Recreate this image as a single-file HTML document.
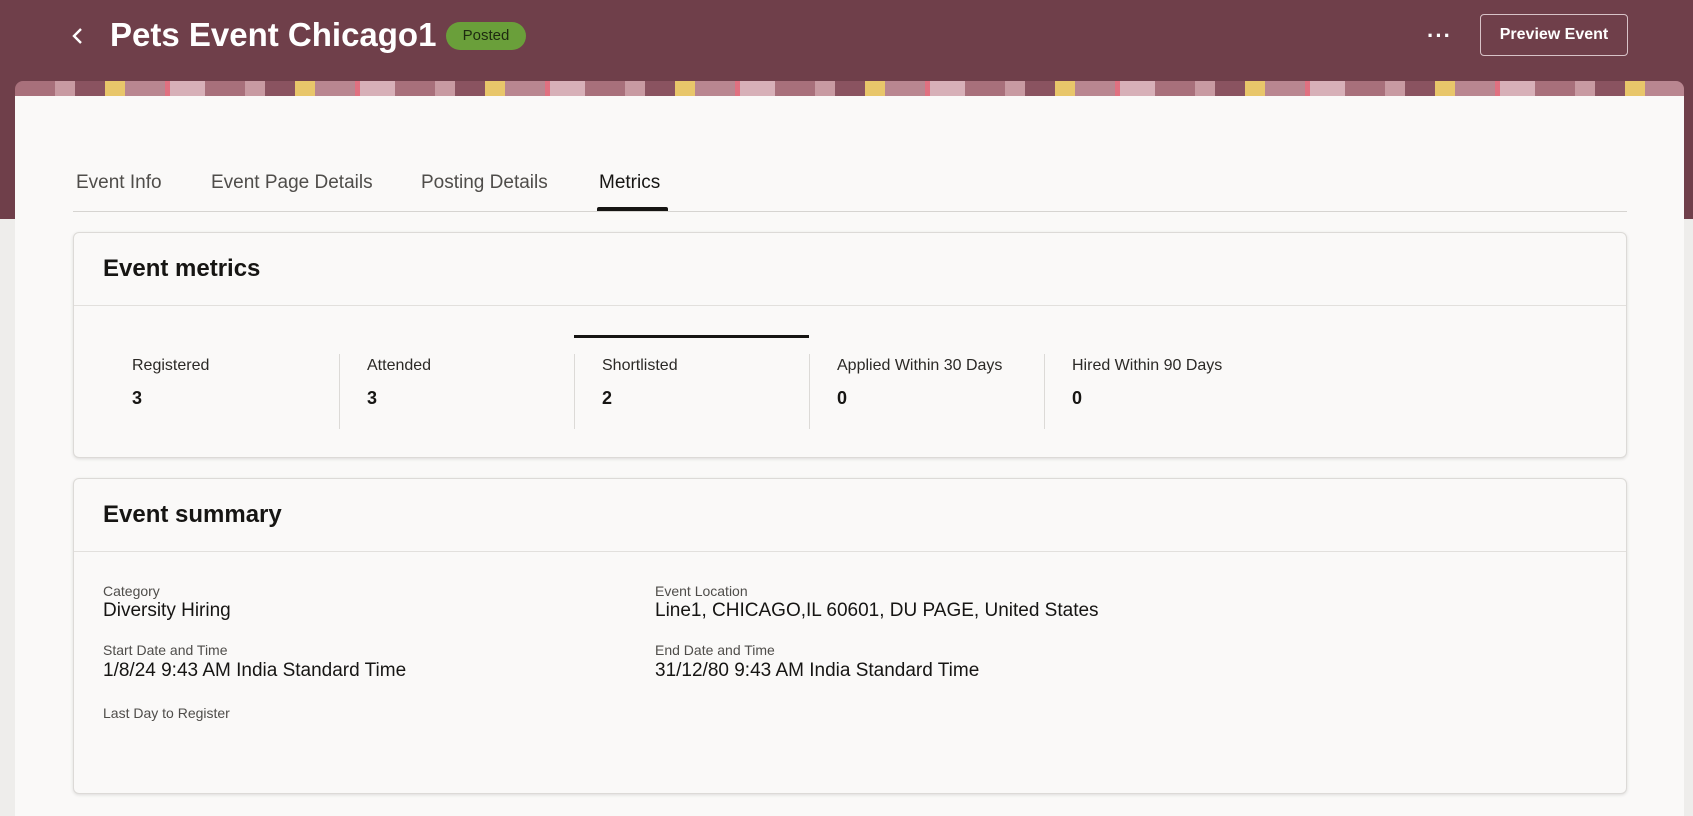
<!DOCTYPE html>
<html><head><style>
*{box-sizing:border-box;margin:0;padding:0}
body{width:1693px;height:816px;overflow:hidden;background:#eeedeb;font-family:"Liberation Sans",sans-serif;color:#161513;position:relative}
.hdr{position:absolute;left:0;top:0;width:1693px;height:219px;background:#6f3f4a}
.strip{position:absolute;left:15px;top:81px;width:1669px;height:16px;border-radius:8px 8px 0 0;overflow:hidden;background:repeating-linear-gradient(90deg,#a8707b 0 40px,#c89aa2 40px 60px,#8a5360 60px 90px,#e8c66a 90px 110px,#b98690 110px 150px,#e07080 150px 155px,#d7b0b8 155px 190px)}
.main{position:absolute;left:15px;top:96px;width:1669px;height:720px;background:#faf9f8}
.t{position:absolute;white-space:nowrap}
.card{position:absolute;left:73px;width:1554px;background:#faf9f8;border:1px solid #dcdad7;border-radius:6px;box-shadow:0 1px 3px rgba(0,0,0,.12)}
.ch{position:absolute;left:29px;font-size:24px;font-weight:bold}
.div{position:absolute;left:0;right:0;height:1px;background:#e2e0dd}
.lbl{font-size:16px;color:#2b2926}
.val{font-size:18px;font-weight:bold}
.sl{font-size:14px;color:#4f4d4a}
.sv{font-size:19px;color:#161513}
</style></head><body>
<div class="hdr"></div>
<div class="strip"></div>
<div class="main"></div>
<svg class="t" style="left:70px;top:26px" width="16" height="20" viewBox="0 0 16 20"><path d="M11 3 L4 10 L11 17" stroke="#fff" stroke-width="2.4" fill="none"/></svg>
<div class="t" style="left:110px;top:16px;font-size:33px;font-weight:bold;color:#fff">Pets Event Chicago1</div>
<div class="t" style="left:446px;top:22px;width:80px;height:28px;border-radius:14px;background:#6a9f3a;color:#1e2a10;font-size:15px;text-align:center;line-height:28px">Posted</div>
<div class="t" style="left:1427px;top:23px;color:#fff;font-size:22px;font-weight:bold;letter-spacing:1px">···</div>
<div class="t" style="left:1480px;top:14px;width:148px;height:42px;border:1px solid #d8c3c8;border-radius:4px;color:#fff;font-size:16px;font-weight:bold;text-align:center;line-height:40px">Preview Event</div>
<div class="t" style="left:76px;top:172px;font-size:19px;color:#4f4d4a">Event Info</div>
<div class="t" style="left:211px;top:172px;font-size:19px;color:#4f4d4a">Event Page Details</div>
<div class="t" style="left:421px;top:172px;font-size:19px;color:#4f4d4a">Posting Details</div>
<div class="t" style="left:599px;top:172px;font-size:19px;color:#161513">Metrics</div>
<div class="t" style="left:73px;top:211px;width:1554px;height:1px;background:#d6d4d1"></div>
<div class="t" style="left:597px;top:207px;width:71px;height:4px;background:#161513;border-radius:2px 2px 0 0"></div>

<div class="card" style="top:232px;height:226px">
<div class="t ch" style="top:22px">Event metrics</div>
<div class="div" style="top:72px"></div>
<div class="t" style="left:500px;top:102px;width:235px;height:3px;background:#161513"></div>
<div class="t" style="left:265px;top:121px;width:1px;height:75px;background:#dcdad7"></div>
<div class="t" style="left:500px;top:121px;width:1px;height:75px;background:#dcdad7"></div>
<div class="t" style="left:735px;top:121px;width:1px;height:75px;background:#dcdad7"></div>
<div class="t" style="left:970px;top:121px;width:1px;height:75px;background:#dcdad7"></div>
<div class="t lbl" style="left:58px;top:124px">Registered</div><div class="t val" style="left:58px;top:155px">3</div>
<div class="t lbl" style="left:293px;top:124px">Attended</div><div class="t val" style="left:293px;top:155px">3</div>
<div class="t lbl" style="left:528px;top:124px">Shortlisted</div><div class="t val" style="left:528px;top:155px">2</div>
<div class="t lbl" style="left:763px;top:124px">Applied Within 30 Days</div><div class="t val" style="left:763px;top:155px">0</div>
<div class="t lbl" style="left:998px;top:124px">Hired Within 90 Days</div><div class="t val" style="left:998px;top:155px">0</div>
</div>

<div class="card" style="top:478px;height:316px">
<div class="t ch" style="top:22px">Event summary</div>
<div class="div" style="top:72px"></div>
<div class="t sl" style="left:29px;top:104px">Category</div>
<div class="t sv" style="left:29px;top:121px">Diversity Hiring</div>
<div class="t sl" style="left:29px;top:163px">Start Date and Time</div>
<div class="t sv" style="left:29px;top:181px">1/8/24 9:43 AM India Standard Time</div>
<div class="t sl" style="left:29px;top:226px">Last Day to Register</div>
<div class="t sl" style="left:581px;top:104px">Event Location</div>
<div class="t sv" style="left:581px;top:121px">Line1, CHICAGO,IL 60601, DU PAGE, United States</div>
<div class="t sl" style="left:581px;top:163px">End Date and Time</div>
<div class="t sv" style="left:581px;top:181px">31/12/80 9:43 AM India Standard Time</div>
</div>
</body></html>
